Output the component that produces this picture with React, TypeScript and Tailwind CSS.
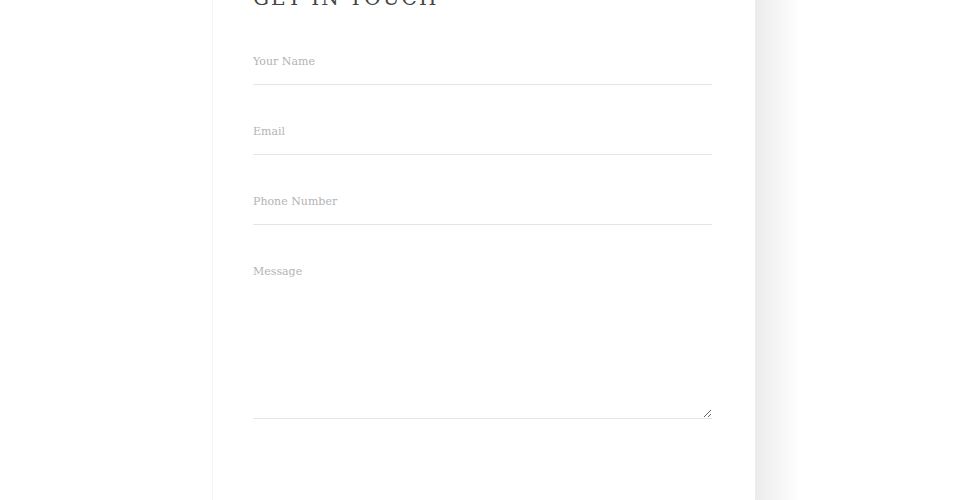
export default function App() {
  const serif = { fontFamily: '"DejaVu Serif", "Liberation Serif", serif' };
  const field =
    "h-[47px] w-full border-b border-[#e4e4e4] bg-transparent p-0 text-[11px] text-[#555] outline-none placeholder:text-[#b3b3b3]";
  return (
    <div className="flex h-[500px] w-full overflow-hidden bg-white" style={serif}>
      <div className="w-[212px] shrink-0" />
      <section className="w-[543px] shrink-0 border-l border-[#f5f5f5] bg-white pl-[40px] pr-[43px]">
        <div className="-mt-[12px]">
          <h2 className="text-[20px] leading-[20px] tracking-[2px] text-[#444] uppercase">
            Get in touch
          </h2>
          <form className="mt-[30px] flex flex-col gap-[23px]">
            <input type="text" placeholder="Your Name" className={field} />
            <input type="email" placeholder="Email" className={field} />
            <input type="tel" placeholder="Phone Number" className={field} />
            <textarea
              placeholder="Message"
              className="h-[171px] w-full border-b border-[#e4e4e4] bg-transparent px-0 pt-[16px] text-[11px] leading-[16px] text-[#555] outline-none placeholder:text-[#b3b3b3]"
            />
          </form>
        </div>
      </section>
      <div className="flex-1 bg-[linear-gradient(to_right,#ebebeb,#ffffff_45px)]" />
    </div>
  );
}
